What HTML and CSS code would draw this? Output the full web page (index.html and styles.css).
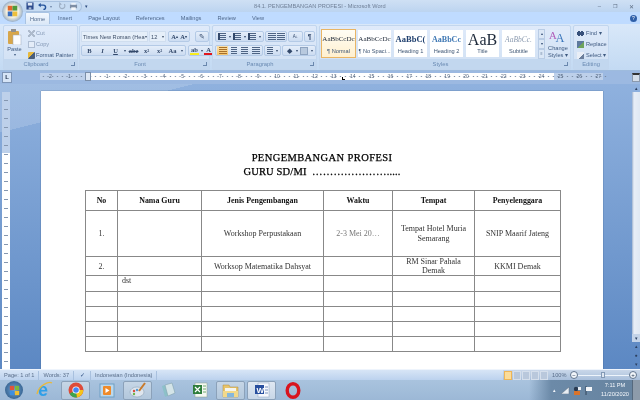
FILE: index.html
```html
<!DOCTYPE html>
<html lang="id">
<head>
    <meta charset="UTF-8">
    <title>84.1. PENGEMBANGAN PROFESI - Microsoft Word</title>
    <link rel="stylesheet" href="styles.css">
</head>
<body>
    <div class="app">
        <!-- Title bar -->
        <header class="titlebar">
            <span class="office-orb"><svg width="21" height="21" viewBox="0 0 22 22"><rect x="6" y="5" width="5" height="5" fill="#e2672b"/><rect x="11" y="5" width="5" height="5" fill="#4f9a3a"/><rect x="6" y="11" width="5" height="5" fill="#3a6fc0"/><rect x="11" y="11" width="5" height="5" fill="#eec03c"/></svg></span>
            <div class="quick-access">
                <svg width="8" height="8" viewBox="0 0 9 9"><rect x=".5" y=".5" width="8" height="8" fill="#2c4a8c"/><rect x="2" y="1" width="5" height="3" fill="#dfe8f5"/><rect x="3" y="6" width="3" height="2.5" fill="#a9bbd6"/></svg>
                <svg width="9" height="8" viewBox="0 0 10 9"><path d="M2 3.500h4a2.500 2.500 0 0 1 0 5" fill="none" stroke="#24539c" stroke-width="1.600"/><path d="M0 3.500 3 1v5z" fill="#24539c"/></svg>
                <span class="qat-caret">▾</span>
                <svg class="dim" width="8" height="8" viewBox="0 0 9 9"><path d="M7 2.500a3 3 0 1 1-4-.5" fill="none" stroke="#7c8ba0" stroke-width="1.300"/><path d="M1.500 0v3h3z" fill="#7c8ba0"/></svg>
                <svg width="9" height="8" viewBox="0 0 10 9"><rect x="1" y="3" width="8" height="4" fill="#7e8ea5"/><rect x="2.500" y="1" width="5" height="2" fill="#eef2f8"/><rect x="2.500" y="6" width="5" height="3" fill="#f4f6fa"/></svg>
            </div>
            <span class="qat-more">▾</span>
            <span class="doc-title">84.1. PENGEMBANGAN PROFESI - Microsoft Word</span>
            <div class="window-btns">
                <span>–</span><span class="restore">❐</span><span>✕</span>
            </div>
        </header>

        <!-- Tabs -->
        <nav class="tabs">
            <span class="tab active">Home</span>
            <span class="tab">Insert</span>
            <span class="tab">Page Layout</span>
            <span class="tab">References</span>
            <span class="tab">Mailings</span>
            <span class="tab">Review</span>
            <span class="tab">View</span>
            <span class="help">?</span>
        </nav>

        <!-- Ribbon -->
        <section class="ribbon">
            <div class="group g-clipboard">
                <div class="group-body clip-body">
                    <div class="paste">
                        <svg width="15" height="16" viewBox="0 0 15 16"><rect x="1" y="2" width="11" height="13" rx="1" fill="#d7a64a"/><rect x="4" y="0" width="5" height="3" fill="#8f8f8f"/><rect x="6" y="6" width="8" height="10" fill="#fbfcfe" stroke="#9aa9bd" stroke-width=".5"/></svg>
                        <span>Paste</span><span class="caret">▾</span>
                    </div>
                    <ul class="clip-list">
                        <li class="dim"><i class="mini cut"></i>Cut</li>
                        <li class="dim"><i class="mini copy"></i>Copy</li>
                        <li><i class="mini brush"></i>Format Painter</li>
                    </ul>
                </div>
                <div class="group-label">Clipboard<i class="launcher"></i></div>
            </div>

            <div class="group g-font">
                <div class="group-body tool-rows">
                    <div class="tool-row">
                        <span class="combo font-name">Times New Roman (Hea<b>▾</b></span>
                        <span class="combo font-size">12<b>▾</b></span>
                        <span class="btn-set"><span class="tool t9 serif">A<sup>▴</sup></span><span class="tool t9 serif">A<sup>▾</sup></span></span>
                        <span class="btn-set clear-set"><span class="tool">✎</span></span>
                    </div>
                    <div class="tool-row">
                        <span class="btn-set wide">
                            <span class="tool serif"><b>B</b></span><span class="tool serif"><em>I</em></span><span class="tool serif under">U</span><span class="tool-caret">▾</span><span class="tool serif"><s>abe</s></span><span class="tool serif">x<sub>2</sub></span><span class="tool serif">x<sup>2</sup></span><span class="tool serif">Aa</span><span class="tool-caret">▾</span>
                        </span>
                        <span class="btn-set">
                            <span class="tool t9 color-yellow serif">ab</span><span class="tool-caret">▾</span><span class="tool t9 color-red serif">A</span><span class="tool-caret">▾</span>
                        </span>
                    </div>
                </div>
                <div class="group-label">Font<i class="launcher"></i></div>
            </div>

            <div class="group g-para">
                <div class="group-body tool-rows tight">
                    <div class="tool-row">
                        <span class="btn-set"><span class="tool"><i class="lines bullets"></i></span><span class="tool-caret">▾</span><span class="tool"><i class="lines bullets"></i></span><span class="tool-caret">▾</span><span class="tool"><i class="lines bullets"></i></span><span class="tool-caret">▾</span></span>
                        <span class="btn-set"><span class="tool t9"><i class="lines"></i></span><span class="tool t9"><i class="lines"></i></span></span>
                        <span class="btn-set"><span class="tool sort">A↓</span></span>
                        <span class="btn-set"><span class="tool pilcrow">¶</span></span>
                    </div>
                    <div class="tool-row">
                        <span class="btn-set"><span class="tool on t11"><i class="lines left"></i></span><span class="tool t11"><i class="lines center"></i></span><span class="tool t11"><i class="lines right"></i></span><span class="tool t11"><i class="lines"></i></span></span>
                        <span class="btn-set"><span class="tool t8"><i class="lines narrow"></i></span><span class="tool-caret">▾</span></span>
                        <span class="btn-set"><span class="tool">◆</span><span class="tool-caret">▾</span><span class="tool"><i class="borders"></i></span><span class="tool-caret">▾</span></span>
                    </div>
                </div>
                <div class="group-label">Paragraph<i class="launcher"></i></div>
            </div>

            <div class="group g-styles">
                <div class="group-body styles-body">
                    <div class="style-card selected"><span class="sample s-normal">AaBbCcDc</span><span class="style-name">¶ Normal</span></div>
                    <div class="style-card"><span class="sample s-normal">AaBbCcDc</span><span class="style-name">¶ No Spaci...</span></div>
                    <div class="style-card"><span class="sample s-h1">AaBbC(</span><span class="style-name">Heading 1</span></div>
                    <div class="style-card"><span class="sample s-h2">AaBbCc</span><span class="style-name">Heading 2</span></div>
                    <div class="style-card"><span class="sample s-title">AaB</span><span class="style-name">Title</span></div>
                    <div class="style-card"><span class="sample s-sub">AaBbCc.</span><span class="style-name">Subtitle</span></div>
                    <div class="style-scroll"><span>▴</span><span>▾</span><span>≡</span></div>
                    <div class="change-styles">
                        <svg width="20" height="15" viewBox="0 0 22 17"><text x="0" y="11" font-family="Liberation Serif" font-size="13" fill="#b05cb8">A</text><text x="8" y="15" font-family="Liberation Serif" font-size="15" fill="#3b76bb">A</text></svg>
                        <span>Change</span><span>Styles ▾</span>
                    </div>
                </div>
                <div class="group-label">Styles<i class="launcher"></i></div>
            </div>

            <div class="group g-editing">
                <div class="group-body edit-list">
                    <span><i class="mini find"></i>Find ▾</span>
                    <span><i class="mini replace"></i>Replace</span>
                    <span><i class="mini select"></i>Select ▾</span>
                </div>
                <div class="group-label">Editing</div>
            </div>
        </section>

        <!-- Horizontal ruler -->
        <div class="ruler-row">
            <span class="tab-stop">L</span>
            <div class="ruler">
                <div class="ruler-margin left"></div>
                <div class="ruler-white"></div>
                <div class="ruler-margin"></div>
                <div class="ruler-nums">
                    <span>2</span><span>1</span><span></span><span>1</span><span>2</span><span>3</span><span>4</span><span>5</span><span>6</span><span>7</span><span>8</span><span>9</span><span>10</span><span>11</span><span>12</span><span>13</span><span>14</span><span>15</span><span>16</span><span>17</span><span>18</span><span>19</span><span>20</span><span>21</span><span>22</span><span>23</span><span>24</span><span>25</span><span>26</span><span>27</span>
                </div>
                <i class="indent-marker"></i>
                <i class="tab-marker"></i>
            </div>
            <span class="ruler-toggle"></span>
        </div>

        <!-- Document area -->
        <main class="workspace">
            <div class="v-ruler"><div class="v-ruler-strip"></div></div>
            <div class="canvas">
                <article class="page">
                    <h1 class="doc-heading">PENGEMBANGAN PROFESI</h1>
                    <h1 class="doc-heading sub">GURU SD/MI &nbsp;&hellip;&hellip;&hellip;&hellip;&hellip;&hellip;&hellip;.....</h1>
                    <table class="doc-table">
                        <colgroup>
                            <col class="c-no"><col class="c-nama"><col class="c-jenis"><col class="c-waktu"><col class="c-tempat"><col class="c-org">
                        </colgroup>
                        <thead>
                            <tr class="r-head"><th>No</th><th>Nama Guru</th><th>Jenis Pengembangan</th><th>Waktu</th><th>Tempat</th><th>Penyelenggara</th></tr>
                        </thead>
                        <tbody>
                            <tr class="r-one"><td>1.</td><td></td><td>Workshop Perpustakaan</td><td class="muted">2-3 Mei 20…</td><td>Tempat Hotel Muria Semarang</td><td>SNIP Maarif Jateng</td></tr>
                            <tr class="r-two"><td>2.</td><td></td><td>Worksop Matematika Dahsyat</td><td></td><td>RM Sinar Pahala Demak</td><td>KKMI Demak</td></tr>
                            <tr class="r-dst"><td></td><td class="top-left">dst</td><td></td><td></td><td></td><td></td></tr>
                            <tr class="r-empty"><td></td><td></td><td></td><td></td><td></td><td></td></tr>
                            <tr class="r-empty"><td></td><td></td><td></td><td></td><td></td><td></td></tr>
                            <tr class="r-empty"><td></td><td></td><td></td><td></td><td></td><td></td></tr>
                            <tr class="r-empty"><td></td><td></td><td></td><td></td><td></td><td></td></tr>
                        </tbody>
                    </table>
                </article>
            </div>
            <aside class="scrollbar">
                <span class="sb-btn">▴</span>
                <span class="sb-thumb"></span>
                <span class="sb-btn dark">▾</span>
                <span class="sb-dot">▴</span>
                <span class="sb-dot">●</span>
                <span class="sb-dot">▾</span>
            </aside>
        </main>

        <!-- Status bar -->
        <footer class="statusbar">
            <span class="st-item">Page: 1 of 1</span>
            <span class="st-item">Words: 37</span>
            <span class="st-item check">✓</span>
            <span class="st-item">Indonesian (Indonesia)</span>
            <div class="st-right">
                <div class="view-btns"><i class="on"></i><i></i><i></i><i></i><i></i></div>
                <span class="zoom-pct">100%</span>
                <span class="zoom-round">−</span>
                <span class="zoom-track"><i></i></span>
                <span class="zoom-round">+</span>
            </div>
        </footer>

        <!-- Windows taskbar -->
        <footer class="taskbar">
            <span class="start-orb"><svg width="11" height="11" viewBox="0 0 13 13"><rect x="1" y="1" width="5" height="5" fill="#e0543a"/><rect x="7" y="1" width="5" height="5" fill="#7cb83e"/><rect x="1" y="7" width="5" height="5" fill="#3d8fe0"/><rect x="7" y="7" width="5" height="5" fill="#f0c030"/></svg></span>
            <span class="task"><svg width="18" height="18" viewBox="0 0 18 18"><text x="2" y="15" font-family="Liberation Sans" font-size="18" font-weight="bold" fill="#2f9fe8">e</text><path d="M1 13C3 4 13 0 16 2" fill="none" stroke="#e8b93c" stroke-width="1.300"/></svg></span>
            <span class="task open"><svg width="16" height="16" viewBox="0 0 16 16"><circle cx="8" cy="8" r="7.500" fill="#dd4b39"/><path d="M8 8 1.500 11.800A7.500 7.500 0 0 0 9 15.400z" fill="#3ba44f"/><path d="M8 8h7.300A7.500 7.500 0 0 1 9 15.400z" fill="#f5c518"/><circle cx="8" cy="8" r="3.600" fill="#fff"/><circle cx="8" cy="8" r="2.800" fill="#4285f4"/></svg></span>
            <span class="task"><svg width="16" height="15" viewBox="0 0 16 15"><rect x="1" y="1" width="14" height="13" fill="#bcd8ec" stroke="#6ea0c5"/><rect x="4" y="3" width="8" height="9" rx="1" fill="#ee8a2a"/><path d="M6.500 5v5l4-2.500z" fill="#fff"/></svg></span>
            <span class="task open"><svg width="18" height="16" viewBox="0 0 18 16"><ellipse cx="8" cy="10" rx="7" ry="5" fill="#dfe6ee" stroke="#8398ad" stroke-width=".5"/><circle cx="5" cy="9" r="1.200" fill="#d94b3c"/><circle cx="8" cy="8" r="1.200" fill="#4f9ad8"/><circle cx="5" cy="12" r="1.200" fill="#6cb348"/><path d="M10 9 16 1" stroke="#c87a2c" stroke-width="2"/></svg></span>
            <span class="task"><svg width="16" height="16" viewBox="0 0 16 16"><path d="M1 4 11 1l3 10-10 4z" fill="#8cc0c8"/><path d="M4 3l7-2 3 10-7 3z" fill="#d4e4e8" stroke="#7f9aa8" stroke-width=".5"/></svg></span>
            <span class="task"><svg width="16" height="16" viewBox="0 0 16 16"><rect x="3" y="1" width="12" height="14" fill="#f5f8f2" stroke="#8aa08a" stroke-width=".5"/><rect x="1" y="3" width="9" height="9" fill="#2f7d3c"/><path d="M3 5l5 5M8 5l-5 5" stroke="#fff" stroke-width="1.200"/><path d="M11 4h3M11 7h3M11 10h3" stroke="#6eaa6e"/></svg></span>
            <span class="task open"><svg width="17" height="15" viewBox="0 0 17 15"><path d="M1 2h6l1 2h8v10H1z" fill="#e8c46a" stroke="#b38f3c" stroke-width=".5"/><rect x="3" y="5" width="11" height="3" fill="#f5f5ee"/><path d="M1 8h15v6H1z" fill="#f2d98a"/><rect x="5" y="10" width="7" height="4" fill="#86b7dc"/></svg></span>
            <span class="task open current"><svg width="16" height="16" viewBox="0 0 16 16"><rect x="4" y="1" width="11" height="14" fill="#f6f8fc" stroke="#8fa2c0" stroke-width=".5"/><rect x="1" y="3" width="9" height="9" fill="#284f9e"/><text x="2.500" y="10.500" font-family="Liberation Sans" font-size="8" font-weight="bold" fill="#fff">W</text><path d="M11 5h3M11 8h3M11 11h3" stroke="#7c94bd"/></svg></span>
            <span class="task"><svg width="16" height="17" viewBox="0 0 16 17"><ellipse cx="8" cy="8.500" rx="5.800" ry="6.800" fill="none" stroke="#d9141e" stroke-width="3.400"/></svg></span>
            <div class="tray">
                <span class="tray-up">▴</span>
                <svg width="9" height="8" viewBox="0 0 9 8"><path d="M0 8 8 1v7z" fill="#e8edf3" stroke="#5d6f82" stroke-width=".5"/></svg>
                <svg width="9" height="9" viewBox="0 0 9 9"><circle cx="3" cy="3" r="2.200" fill="#2b3c52"/><rect x="1" y="5" width="6" height="4" fill="#d9742c"/><rect x="5" y="1" width="3" height="3" fill="#e8edf3"/></svg>
                <svg width="8" height="9" viewBox="0 0 8 9"><path d="M1 0v9" stroke="#33465c"/><path d="M1 1h6v4H1z" fill="#f3f5f8"/></svg>
                <div class="clock"><span>7:11 PM</span><span>11/20/2020</span></div>
                <span class="show-desktop"></span>
            </div>
        </footer>
    </div>
</body>
</html>
```

FILE: styles.css
```css
/* Base */
* {
    margin: 0;
    padding: 0;
    box-sizing: border-box;
}

body {
    width: 640px;
    height: 400px;
    overflow: hidden;
    font-family: "Liberation Sans", Arial, sans-serif;
    font-size: 5.65px;
    color: #3f5a80;
}

/* the reference is a downscaled capture, everything is a little soft */
.app {
    display: flex;
    flex-direction: column;
    height: 400px;
    background: #bfd6f1;
    filter: blur(0.25px);
}

/* Title bar */
.titlebar {
    position: relative;
    display: flex;
    align-items: center;
    height: 12px;
    padding-left: 26px;
    background: linear-gradient(#cfe0f4, #bcd4f0);
}

.office-orb {
    position: absolute;
    left: 2px;
    top: 1px;
    z-index: 2;
    width: 21px;
    height: 21px;
    border-radius: 50%;
    background: radial-gradient(circle, #f6f1df 40%, #8aa5c6 75%, #dce8f5);
}

.quick-access {
    display: flex;
    align-items: center;
    gap: 3px;
    height: 11px;
    padding: 0 3px 0 0;
    border-radius: 0 6px 6px 0;
    background: #c7dcf3;
    border: 1px solid #a9c2e0;
    border-left: 0;
}

.quick-access svg:first-child {
    margin-right: 1px;
}

.qat-caret {
    font-size: 4px;
    margin-right: 3px;
    color: #6f86a6;
}

.qat-more {
    margin-left: 3px;
    font-size: 5px;
    color: #2c4a7c;
}

.doc-title {
    position: absolute;
    left: 254px;
    top: 3px;
    color: #6f7f96;
    white-space: nowrap;
}

.window-btns {
    display: flex;
    gap: 12px;
    margin-left: auto;
    padding-right: 6px;
    color: #5b6b80;
    font-size: 6px;
}

.restore {
    font-size: 5px;
}

/* Tabs */
.tabs {
    display: flex;
    align-items: center;
    height: 12px;
    padding-left: 25px;
    background: #bfdbff;
}

.tab {
    padding: 0 8px;
    color: #4f688c;
    white-space: nowrap;
}

.tab.active {
    height: 12px;
    padding: 2px 4px 0;
    line-height: 8px;
    background: linear-gradient(#f3f8fe, #dbe8f7);
    border: 1px solid #a8c3e3;
    border-bottom: 0;
    border-radius: 2px 2px 0 0;
}

.help {
    width: 7px;
    height: 7px;
    margin: 0 3px 0 auto;
    border-radius: 50%;
    background: #2f5fa8;
    color: #fff;
    font-size: 5px;
    line-height: 7px;
    text-align: center;
}

/* Ribbon */
.ribbon {
    display: flex;
    gap: 1px;
    height: 47px;
    padding: 1px 0 0 3px;
    background: linear-gradient(#d9e8f9, #c3daf3);
    border-bottom: 1px solid #9ebbdd;
}

.group {
    display: flex;
    flex-direction: column;
    height: 45px;
    border: 1px solid #c2d6ee;
    border-radius: 2px;
    background: linear-gradient(#dfeafa, #d0e0f3);
}

.g-clipboard { width: 75px; }
.g-font { width: 131px; }
.g-para { width: 105px; margin-left: 1px; }
.g-styles { width: 252px; margin-left: 1px; }
.g-editing { width: 36px; margin-left: 1px; }

.group-body {
    height: 33px;
    flex: none;
}

.group-label {
    position: relative;
    height: 10px;
    padding-right: 9px;
    line-height: 10px;
    text-align: center;
    font-size: 5.8px;
    color: #6a8ab2;
    background: #c2d7ef;
}

.g-editing .group-label {
    padding-right: 0;
}

.launcher {
    position: absolute;
    right: 2px;
    top: 3px;
    width: 4px;
    height: 4px;
    border-right: 1px solid #6a87ad;
    border-bottom: 1px solid #6a87ad;
}

.dim {
    opacity: 0.55;
}

/* Clipboard */
.clip-body {
    display: flex;
    padding: 3px 0 0 0;
}

.paste {
    display: flex;
    flex-direction: column;
    align-items: center;
    width: 21px;
    line-height: 7px;
}

.paste svg {
    margin-bottom: 1px;
}

.caret {
    font-size: 4px;
    line-height: 4px;
}

.clip-list {
    display: flex;
    flex-direction: column;
    gap: 3px;
    margin-left: 3px;
    list-style: none;
    white-space: nowrap;
}

.clip-list li {
    display: flex;
    align-items: center;
    gap: 1px;
    height: 8px;
}

.mini {
    display: inline-block;
    width: 7px;
    height: 7px;
    flex: none;
}

.cut { background: linear-gradient(135deg, transparent 40%, #8795a8 40% 60%, transparent 60%), linear-gradient(45deg, transparent 40%, #8795a8 40% 60%, transparent 60%); }
.copy { background: #eef3fa; border: 1px solid #8c9db5; }
.brush { background: linear-gradient(135deg, #e8b93c 50%, #4a5f7c 50%); border-radius: 1px; }
.find { background: radial-gradient(circle at 30% 50%, #37507a 35%, transparent 38%), radial-gradient(circle at 72% 50%, #37507a 35%, transparent 38%); }
.replace { background: linear-gradient(135deg, #5e7a9e 50%, #6ea35c 50%); }
.select { background: linear-gradient(135deg, #e9eef6 60%, #6c7f9c 60%); }

/* Font and paragraph tools */
.tool-rows {
    display: flex;
    flex-direction: column;
    gap: 3px;
    padding: 5px 0 0 1px;
}

.tool-rows.tight {
    padding-left: 2px;
}

.tool-row {
    display: flex;
    gap: 2px;
    height: 11px;
}

.tight .tool-row {
    gap: 1px;
}

.combo {
    display: flex;
    justify-content: space-between;
    align-items: center;
    height: 11px;
    padding: 0 1px;
    background: #e6eff9;
    border: 1px solid #d0deef;
    color: #3e4f68;
    white-space: nowrap;
}

.combo b {
    font-size: 4px;
    font-weight: normal;
}

.font-name { width: 67px; margin-right: -1px; }
.font-size { width: 22px; }

.btn-set {
    display: flex;
    align-items: center;
    height: 11px;
    padding: 0 1px;
    border: 1px solid #b4cae6;
    border-radius: 2px;
    background: linear-gradient(#e5eefa, #ccdcf1);
}

.clear-set {
    margin-left: 3px;
}

.tool {
    display: flex;
    align-items: center;
    justify-content: center;
    flex: none;
    width: 10px;
    height: 9px;
    color: #33496b;
    font-size: 6.5px;
    line-height: 9px;
}

.t8 { width: 8px; }
.t9 { width: 9px; }
.t11 { width: 11px; }

.tool.on {
    background: linear-gradient(#fbe0a8, #f6c56f);
}

.tool sup,
.tool sub {
    font-size: 4px;
    line-height: 0;
}

.serif {
    font-family: "Liberation Serif", serif;
    font-weight: bold;
}

.wide .tool {
    width: 13px;
}

.under {
    text-decoration: underline;
}

.tool-caret {
    flex: none;
    width: 5px;
    font-size: 4px;
    text-align: center;
    color: #33496b;
}

.color-yellow {
    border-bottom: 2px solid #f8ec1d;
}

.color-red {
    border-bottom: 2px solid #e0161d;
}

.sort {
    width: 11px;
    font-size: 4.5px;
}

.pilcrow {
    width: 7px;
    font-weight: bold;
}

.lines {
    display: block;
    width: 8px;
    height: 7px;
    background: repeating-linear-gradient(#4e6484 0 1px, transparent 1px 2px);
}

.lines.bullets {
    border-left: 2px solid #33496b;
}

.lines.center {
    width: 6px;
}

.lines.right {
    width: 7px;
}

.lines.narrow {
    width: 6px;
}

.lines.left {
    background: repeating-linear-gradient(#a7702a 0 1px, transparent 1px 2px);
}

.borders {
    display: block;
    width: 8px;
    height: 8px;
    background: #b8c9de;
    border: 1px solid #8fa4c0;
}

/* Styles gallery */
.styles-body {
    display: flex;
    padding: 4px 0 0 2px;
    gap: 3px;
}

.style-card {
    display: flex;
    flex-direction: column;
    align-items: center;
    justify-content: space-between;
    flex: none;
    width: 33px;
    height: 27px;
    padding: 4px 0 2px;
    background: #fff;
    color: #3f5674;
    white-space: nowrap;
    overflow: hidden;
}

.style-card.selected {
    outline: 1px solid #e9b564;
    background: linear-gradient(#fffdf5, #fff0cf);
}

.sample {
    font-family: "Liberation Serif", serif;
    line-height: 11px;
}

.s-normal { font-size: 7px; color: #232d3c; }
.s-h1 { font-size: 8.5px; font-weight: bold; color: #20406f; }
.s-h2 { font-size: 8px; font-weight: bold; color: #3f78b4; }
.s-title { font-size: 16px; color: #1b2738; line-height: 11px; }
.s-sub { font-size: 7.5px; font-style: italic; color: #8e9db2; }

.style-name {
    line-height: 7px;
}

.style-scroll {
    display: flex;
    flex-direction: column;
    flex: none;
    width: 7px;
    height: 28px;
    margin-top: -1px;
}

.style-scroll span {
    flex: 1;
    font-size: 4px;
    line-height: 8px;
    text-align: center;
    background: #dbe7f6;
    border: 1px solid #b9cce5;
    color: #2e4a72;
}

.change-styles {
    display: flex;
    flex-direction: column;
    align-items: center;
    flex: none;
    width: 24px;
    margin-left: -2px;
    line-height: 7px;
    white-space: nowrap;
}

.change-styles svg {
    margin-bottom: 1px;
}

/* Editing */
.edit-list {
    display: flex;
    flex-direction: column;
    gap: 3px;
    padding: 3px 0 0 3px;
    white-space: nowrap;
}

.edit-list span {
    display: flex;
    align-items: center;
    gap: 2px;
    height: 8px;
}

/* Horizontal ruler */
.ruler-row {
    position: relative;
    display: flex;
    align-items: center;
    height: 13px;
    background: #9cb9e1;
}

.tab-stop {
    width: 10px;
    height: 11px;
    margin-left: 2px;
    background: #d6e4f6;
    border: 1px solid #7d94b5;
    color: #1a2a44;
    font-size: 6px;
    font-weight: bold;
    line-height: 9px;
    text-align: center;
}

.ruler {
    position: absolute;
    left: 40px;
    top: 2px;
    display: flex;
    width: 563px;
    height: 7px;
}

.ruler-margin {
    flex: 1;
    background: #bdd0ea;
}

.ruler-white {
    width: 465px;
    background: #fff;
}

.ruler-nums {
    position: absolute;
    left: 1px;
    top: 0;
    display: flex;
    font-size: 5px;
    line-height: 7px;
    color: #52647d;
}

.ruler-nums span {
    width: 18.9px;
    text-align: center;
    flex: none;
    background: radial-gradient(circle, #76879e 0.5px, transparent 1px) 0 0 / 4.7px 7px;
}

.indent-marker {
    position: absolute;
    left: 45px;
    top: -1px;
    width: 6px;
    height: 9px;
    background: #dde7f4;
    border: 1px solid #7b8fa9;
}

.tab-marker {
    position: absolute;
    left: 302px;
    top: 4px;
    width: 3px;
    height: 3px;
    border-left: 1px solid #000;
    border-bottom: 1px solid #000;
}

.ruler-toggle {
    width: 8px;
    height: 9px;
    margin: 0 0 0 auto;
    background: #d5dee9;
    border: 1px solid #8a99ad;
    border-top: 2px solid #333;
}

/* Document area */
.workspace {
    display: flex;
    flex: 1;
    min-height: 0;
    overflow: hidden;
    background:
        linear-gradient(166deg, rgba(255, 255, 255, 0.16) 0 47px, transparent 47px),
        linear-gradient(#8fb1de, #5c88c3);
}

.v-ruler {
    flex: none;
    width: 12px;
    padding: 8px 2px 0;
}

.v-ruler-strip {
    height: 100%;
    background:
        repeating-linear-gradient(transparent 0 8px, #8597b0 8px 9px) center / 4px 100% no-repeat,
        linear-gradient(#bdd0ea 0 61px, #fff 61px);
}

.canvas {
    flex: 1;
    padding: 7px 0 0 29px;
}

.page {
    width: 562px;
    height: 300px;
    padding: 60px 44px 0;
    background: #fff;
    color: #000;
    box-shadow: 0 0 1px #33537f;
    font-family: "Liberation Serif", serif;
}

.doc-heading {
    font-size: 10.5px;
    line-height: 14px;
    font-weight: normal;
    text-align: center;
    letter-spacing: 0.4px;
    -webkit-text-stroke: 0.25px #000;
}

.doc-heading.sub {
    letter-spacing: 0.15px;
}

.doc-table {
    width: 475px;
    margin-top: 11px;
    border-collapse: collapse;
    table-layout: fixed;
    font-size: 8px;
    color: #333;
}

.doc-table th,
.doc-table td {
    padding: 0 6px;
    border: 1px solid #888;
    text-align: center;
    line-height: 9.5px;
}

.doc-table th {
    font-size: 7.9px;
    color: #111;
}

.c-no { width: 32px; }
.c-nama { width: 84px; }
.c-jenis { width: 122px; }
.c-waktu { width: 69px; }
.c-tempat { width: 82px; }
.c-org { width: 86px; }

.r-head { height: 20px; }
.r-one { height: 46px; }
.r-two { height: 19px; }
.r-dst { height: 16px; }
.r-empty { height: 15px; }

.doc-table .r-two td {
    line-height: 9px;
}

.muted {
    color: #777;
}

.doc-table td.top-left {
    text-align: left;
    vertical-align: top;
    padding-left: 4px;
}

/* Scroll bar */
.scrollbar {
    display: flex;
    flex-direction: column;
    align-items: center;
    flex: none;
    width: 8px;
    margin-left: 4px;
    font-size: 5px;
    color: #2c4061;
}

.sb-btn {
    width: 8px;
    height: 8px;
    line-height: 8px;
    text-align: center;
    flex: none;
}

.sb-btn.dark {
    background: #c3d3e8;
}

.sb-thumb {
    flex: 1;
    width: 8px;
    background: linear-gradient(90deg, #9fb3cf, #e8eef7 25%, #dfe8f3);
}

.sb-dot {
    height: 9px;
    line-height: 9px;
    flex: none;
}

/* Status bar */
.statusbar {
    display: flex;
    align-items: center;
    height: 11px;
    background: linear-gradient(#d7e5f6, #bcd2ee);
    border-top: 1px solid #eef4fc;
    color: #5a6e8a;
}

.st-item {
    padding: 0 4px;
    line-height: 9px;
    border-right: 1px solid #a8c0de;
    white-space: nowrap;
}

.st-item.check {
    width: 17px;
    text-align: center;
    color: #2d4e80;
}

.st-right {
    display: flex;
    align-items: center;
    height: 10px;
    margin-left: auto;
    padding: 0 3px 0 1px;
    background: linear-gradient(#c9d7e9, #a9bfdb);
}

.view-btns {
    display: flex;
    gap: 1px;
}

.view-btns i {
    width: 8px;
    height: 9px;
    background: #b9c8dc;
    border: 1px solid #d5dfec;
}

.view-btns i.on {
    background: #fbdc9a;
    border-color: #eeb658;
}

.zoom-pct {
    margin-left: 4px;
    width: 18px;
}

.zoom-round {
    width: 8px;
    height: 8px;
    border-radius: 50%;
    background: #f1f5fa;
    border: 1px solid #61758f;
    color: #223650;
    font-size: 6px;
    line-height: 6px;
    text-align: center;
}

.zoom-track {
    position: relative;
    width: 51px;
    height: 1px;
    background: #eef4fb;
}

.zoom-track i {
    position: absolute;
    left: 23px;
    top: -3px;
    width: 4px;
    height: 6px;
    background: #dfe7f1;
    border: 1px solid #8399b5;
}

/* Windows taskbar */
.taskbar {
    display: flex;
    align-items: center;
    height: 20px;
    background: linear-gradient(#a9c3de, #9cb8d6);
}

.start-orb {
    display: flex;
    align-items: center;
    justify-content: center;
    flex: none;
    width: 18px;
    height: 18px;
    margin: 0 6px 0 5px;
    border-radius: 50%;
    background: radial-gradient(circle, #6ba4d9, #274e78);
}

.task {
    display: flex;
    align-items: center;
    justify-content: center;
    flex: none;
    width: 29px;
    height: 19px;
    margin: 0 1px;
}

.task.open {
    background: linear-gradient(#c6d6e6, #b2c7dc);
    border: 1px solid #8ba1b9;
    border-radius: 2px;
}

.task.current {
    background: linear-gradient(#dfe8f2, #c7d6e7);
}

.tray {
    display: flex;
    align-items: center;
    gap: 3px;
    height: 20px;
    margin-left: auto;
    padding-left: 24px;
    background: linear-gradient(90deg, transparent, #6c8aa8 22px, #66839f);
    color: #f4f7fb;
}

.tray-up {
    font-size: 5px;
    margin-right: 2px;
}

.clock {
    display: flex;
    flex-direction: column;
    align-items: center;
    flex: none;
    width: 30px;
    margin: 0 -1px 0 4px;
    line-height: 9px;
}

.show-desktop {
    width: 8px;
    height: 20px;
    background: #8d9baa;
    border-left: 1px solid #56697d;
}
```
